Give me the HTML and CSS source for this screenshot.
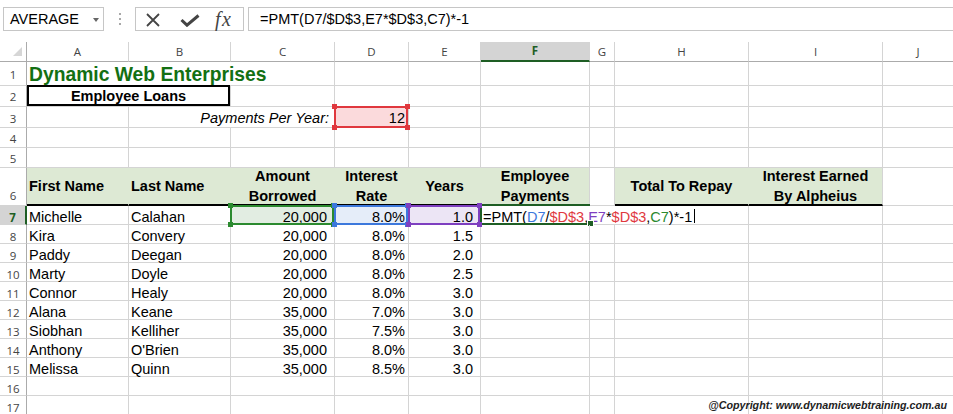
FILE: index.html
```html
<!DOCTYPE html>
<html>
<head>
<meta charset="utf-8">
<link rel="stylesheet" href="styles.css">
</head>
<body>
<div class="toolbar">
  <div class="namebox"><span>AVERAGE</span><span class="arrow"></span></div>
  <div class="grip"><i></i><i></i><i></i></div>
  <div class="fbtns">
    <svg class="ic-x" width="14" height="14" viewBox="0 0 14 14"><path d="M1 1L13 13M13 1L1 13" stroke="#444" stroke-width="1.8" fill="none"/></svg>
    <svg class="ic-ok" width="20" height="13" viewBox="0 0 20 13"><path d="M1.5 6L7 11.2L18.5 1.5" stroke="#444" stroke-width="3" fill="none"/></svg>
    <span class="fx">fx</span>
  </div>
  <div class="fbar">=PMT(D7/$D$3,E7*$D$3,C7)*-1</div>
</div>
<div class="sheet">
  <div class="corner"><svg width="9" height="9" viewBox="0 0 9 9"><polygon points="9,0 9,9 0,9" fill="#d6d6d6"/></svg></div>
  <div class="ch">A</div><div class="ch">B</div><div class="ch">C</div><div class="ch">D</div><div class="ch">E</div><div class="ch act">F</div><div class="ch">G</div><div class="ch">H</div><div class="ch">I</div><div class="ch">J</div>

  <div class="rh p4">1</div>
  <div class="c s3 title">Dynamic Web Enterprises</div>
  <div class="c"></div><div class="c"></div><div class="c"></div><div class="c"></div><div class="c"></div><div class="c"></div><div class="c"></div>

  <div class="rh p3">2</div>
  <div class="c s2 boxed">Employee Loans</div>
  <div class="c"></div><div class="c"></div><div class="c"></div><div class="c"></div><div class="c"></div><div class="c"></div><div class="c"></div><div class="c"></div>

  <div class="rh p2">3</div>
  <div class="c"></div>
  <div class="c s2 it pb2">Payments Per Year:</div>
  <div class="c pct pb2 bgr">12<span class="sel red"><i class="tl"></i><i class="tr"></i><i class="bl"></i><i class="br"></i></span></div>
  <div class="c"></div><div class="c"></div><div class="c"></div><div class="c"></div><div class="c"></div><div class="c"></div>

  <div class="rh p2">4</div>
  <div class="c"></div><div class="c"></div><div class="c"></div><div class="c"></div><div class="c"></div><div class="c"></div><div class="c"></div><div class="c"></div><div class="c"></div><div class="c"></div>

  <div class="rh p2">5</div>
  <div class="c"></div><div class="c"></div><div class="c"></div><div class="c"></div><div class="c"></div><div class="c"></div><div class="c"></div><div class="c"></div><div class="c"></div><div class="c"></div>

  <div class="rh p3">6</div>
  <div class="c hd">First Name</div>
  <div class="c hd">Last Name</div>
  <div class="c hd ctr"><span>Amount<br>Borrowed</span></div>
  <div class="c hd ctr"><span>Interest<br>Rate</span></div>
  <div class="c hd ctr">Years</div>
  <div class="c hd ctr end"><span>Employee<br>Payments</span></div>
  <div class="c"></div>
  <div class="c hd ctr">Total To Repay</div>
  <div class="c hd ctr end"><span>Interest Earned<br>By Alpheius</span></div>
  <div class="c"></div>

  <div class="rh act">7</div>
  <div class="c">Michelle</div>
  <div class="c">Calahan</div>
  <div class="c num bgg">20,000<span class="sel grn"><i class="tl"></i><i class="tr"></i><i class="bl"></i><i class="br"></i></span></div>
  <div class="c pct bgb">8.0%<span class="sel blu"><i class="tl"></i><i class="tr"></i><i class="bl"></i><i class="br"></i></span></div>
  <div class="c num bgp">1.0<span class="sel pur"><i class="tl"></i><i class="tr"></i><i class="bl"></i><i class="br"></i></span></div>
  <div class="c s3"><span class="fml">=PMT(<span class="rb">D7</span>/<span class="rr">$D$3</span>,<span class="rp">E7</span>*<span class="rr">$D$3</span>,<span class="rg">C7</span>)*-1<i class="caret"></i></span><span class="acell"><i class="fill"></i></span></div>
  <div class="c"></div><div class="c"></div>

  <div class="rh">8</div>
  <div class="c">Kira</div><div class="c">Convery</div><div class="c num">20,000</div><div class="c pct">8.0%</div><div class="c num">1.5</div>
  <div class="c"></div><div class="c"></div><div class="c"></div><div class="c"></div><div class="c"></div>

  <div class="rh">9</div>
  <div class="c">Paddy</div><div class="c">Deegan</div><div class="c num">20,000</div><div class="c pct">8.0%</div><div class="c num">2.0</div>
  <div class="c"></div><div class="c"></div><div class="c"></div><div class="c"></div><div class="c"></div>

  <div class="rh">10</div>
  <div class="c">Marty</div><div class="c">Doyle</div><div class="c num">20,000</div><div class="c pct">8.0%</div><div class="c num">2.5</div>
  <div class="c"></div><div class="c"></div><div class="c"></div><div class="c"></div><div class="c"></div>

  <div class="rh">11</div>
  <div class="c">Connor</div><div class="c">Healy</div><div class="c num">20,000</div><div class="c pct">8.0%</div><div class="c num">3.0</div>
  <div class="c"></div><div class="c"></div><div class="c"></div><div class="c"></div><div class="c"></div>

  <div class="rh">12</div>
  <div class="c">Alana</div><div class="c">Keane</div><div class="c num">35,000</div><div class="c pct">7.0%</div><div class="c num">3.0</div>
  <div class="c"></div><div class="c"></div><div class="c"></div><div class="c"></div><div class="c"></div>

  <div class="rh">13</div>
  <div class="c">Siobhan</div><div class="c">Kelliher</div><div class="c num">35,000</div><div class="c pct">7.5%</div><div class="c num">3.0</div>
  <div class="c"></div><div class="c"></div><div class="c"></div><div class="c"></div><div class="c"></div>

  <div class="rh">14</div>
  <div class="c">Anthony</div><div class="c">O'Brien</div><div class="c num">35,000</div><div class="c pct">8.0%</div><div class="c num">3.0</div>
  <div class="c"></div><div class="c"></div><div class="c"></div><div class="c"></div><div class="c"></div>

  <div class="rh">15</div>
  <div class="c">Melissa</div><div class="c">Quinn</div><div class="c num">35,000</div><div class="c pct">8.5%</div><div class="c num">3.0</div>
  <div class="c"></div><div class="c"></div><div class="c"></div><div class="c"></div><div class="c"></div>

  <div class="rh">16</div>
  <div class="c"></div><div class="c"></div><div class="c"></div><div class="c"></div><div class="c"></div><div class="c"></div><div class="c"></div><div class="c"></div><div class="c"></div><div class="c"></div>

  <div class="rh">17</div>
  <div class="c"></div><div class="c"></div><div class="c"></div><div class="c"></div><div class="c"></div><div class="c"></div><div class="c"></div><div class="c"></div><div class="c"></div><div class="c"></div>

  <div class="copy">@Copyright: www.dynamicwebtraining.com.au</div>
</div>
</body>
</html>
```
FILE: styles.css
```css
* { box-sizing: border-box; margin: 0; padding: 0; }
html, body { background: #fff; }
body {
  width: 953px;
  height: 414px;
  overflow: hidden;
  font-family: "Liberation Sans", Arial, sans-serif;
  color: #000;
}

/* formula toolbar */
.toolbar {
  height: 42px;
  display: flex;
  align-items: flex-start;
  padding: 7px 0 0 3px;
}
.namebox {
  flex: none;
  width: 101px;
  height: 24px;
  border: 1px solid #c6c6c6;
  display: flex;
  align-items: center;
  justify-content: space-between;
  padding: 0 4px 0 6px;
  font-size: 14.5px;
}
.arrow {
  width: 0;
  height: 0;
  border-left: 3.5px solid transparent;
  border-right: 3.5px solid transparent;
  border-top: 4px solid #666;
  margin-top: 1px;
}
.grip {
  flex: none;
  display: flex;
  flex-direction: column;
  gap: 3px;
  margin: 6px 0 0 15px;
}
.grip i { display: block; width: 2px; height: 2px; background: #a8a8a8; }
.fbtns {
  flex: none;
  width: 109px;
  height: 24px;
  margin-left: 14px;
  border: 1px solid #c6c6c6;
  display: flex;
  align-items: center;
  padding-left: 10px;
}
.ic-x { display: block; margin-top: 1px; }
.ic-ok { display: block; margin: 3px 0 0 20px; }
.fx {
  margin-left: 15px;
  font-family: "Liberation Serif", "Times New Roman", serif;
  font-style: italic;
  font-size: 20px;
  line-height: 20px;
  letter-spacing: 1.5px;
  color: #444;
}
.fbar {
  flex: 1;
  height: 24px;
  margin-left: 4px;
  margin-right: -2px;
  border: 1px solid #c6c6c6;
  display: flex;
  align-items: center;
  padding-left: 11px;
  font-size: 14.5px;
  white-space: nowrap;
}

/* sheet grid */
.sheet {
  display: grid;
  grid-template-columns: 27px 102px 102px 104px 74px 72px 109px 25px 134px 134px 71px;
  grid-template-rows: 20px 24px 21px 21px 20px 20px 38px repeat(11, 19px);
  position: relative;
  font-size: 14.5px;
}
.corner {
  border-right: 1px solid #ababab;
  border-bottom: 1px solid #ababab;
  display: flex;
  align-items: flex-end;
  justify-content: flex-end;
  padding: 0 4px 5px 0;
}
.corner svg { display: block; }
.ch {
  border-right: 1px solid #d4d4d4;
  border-bottom: 1px solid #ababab;
  display: flex;
  align-items: center;
  justify-content: center;
  font: 11.5px/12px "Open Sans", sans-serif;
  color: #444;
}
.ch.act {
  background: #d4d4d4;
  color: #1e5e24;
  font-weight: bold;
  border-bottom: 2px solid #1e5e24;
}
.rh {
  border-right: 1px solid #ababab;
  border-bottom: 1px solid #d4d4d4;
  display: flex;
  align-items: flex-end;
  justify-content: center;
  font: 11.5px/12px "Open Sans", sans-serif;
  color: #444;
}
.rh.p2 { padding-bottom: 2px; }
.rh.p3 { padding-bottom: 3px; }
.rh.p4 { padding-bottom: 4px; }
.rh.act {
  background: #d4d4d4;
  color: #1e5e24;
  font-weight: bold;
  border-right: 2px solid #1e5e24;
}

.c {
  position: relative;
  border-right: 1px solid #d4d4d4;
  border-bottom: 1px solid #d4d4d4;
  display: flex;
  align-items: flex-end;
  padding: 0 2px;
  line-height: 14px;
  white-space: nowrap;
}
.s2 { grid-column: span 2; }
.s3 { grid-column: span 3; }
.title {
  font-size: 19.3px;
  font-weight: bold;
  color: #137013;
  line-height: 21px;
}
.boxed {
  justify-content: center;
  font-weight: bold;
  padding-bottom: 3px;
}
.boxed::after {
  content: "";
  position: absolute;
  top: -1px;
  left: 0;
  right: 0;
  bottom: 0;
  border: 2px solid #000;
}
.it { font-style: italic; justify-content: flex-end; padding-right: 5px; }
.pb2 { padding-bottom: 2px; }
.num { justify-content: flex-end; padding-right: 7px; }
.pct { justify-content: flex-end; padding-right: 3px; }
.hd {
  background: #dde9d4;
  border-right-color: #dde9d4;
  border-bottom: 2px solid #000;
  align-items: center;
  font-weight: bold;
  line-height: 20px;
}
.hd.end { border-right-color: #d4d4d4; }
.ctr { justify-content: center; text-align: center; }

/* reference highlights */
.sel {
  position: absolute;
  top: -1px;
  left: -1px;
  right: 0;
  bottom: -1px;
  border: 2px solid;
}
.sel i {
  position: absolute;
  width: 5px;
  height: 5px;
  background: currentColor;
  z-index: 2;
}
.sel .tl { left: -4px; top: -4px; }
.sel .tr { right: -4px; top: -4px; }
.sel .bl { left: -4px; bottom: -4px; }
.sel .br { right: -4px; bottom: -4px; }
.red { color: #e0383e; }
.grn { color: #2b8a2f; }
.blu { color: #3c78dc; }
.pur { color: #7e3fc0; }
.bgr { background: #fbdadc; }
.bgg { background: #e2ede2; }
.bgb { background: #e5edf9; }
.bgp { background: #ece5f5; }

.rb { color: #3c78dc; }
.rr { color: #e0383e; }
.rp { color: #7e3fc0; }
.rg { color: #2b8a2f; }
.caret {
  display: inline-block;
  width: 1px;
  height: 14px;
  background: #000;
  margin-left: 2px;
  vertical-align: -1px;
}
.acell {
  position: absolute;
  top: -2px;
  left: -1px;
  width: 110px;
  bottom: -1px;
  border: 2px solid #1e5e24;
  border-right: 0;
}
.fill {
  position: absolute;
  right: -4px;
  bottom: -4px;
  width: 7px;
  height: 7px;
  background: #1e5e24;
  border: 1px solid #fff;
}

.copy {
  position: absolute;
  right: 6px;
  bottom: 4px;
  font: italic bold 10.7px/12px "Liberation Sans", Arial, sans-serif;
  color: #222;
}
```
